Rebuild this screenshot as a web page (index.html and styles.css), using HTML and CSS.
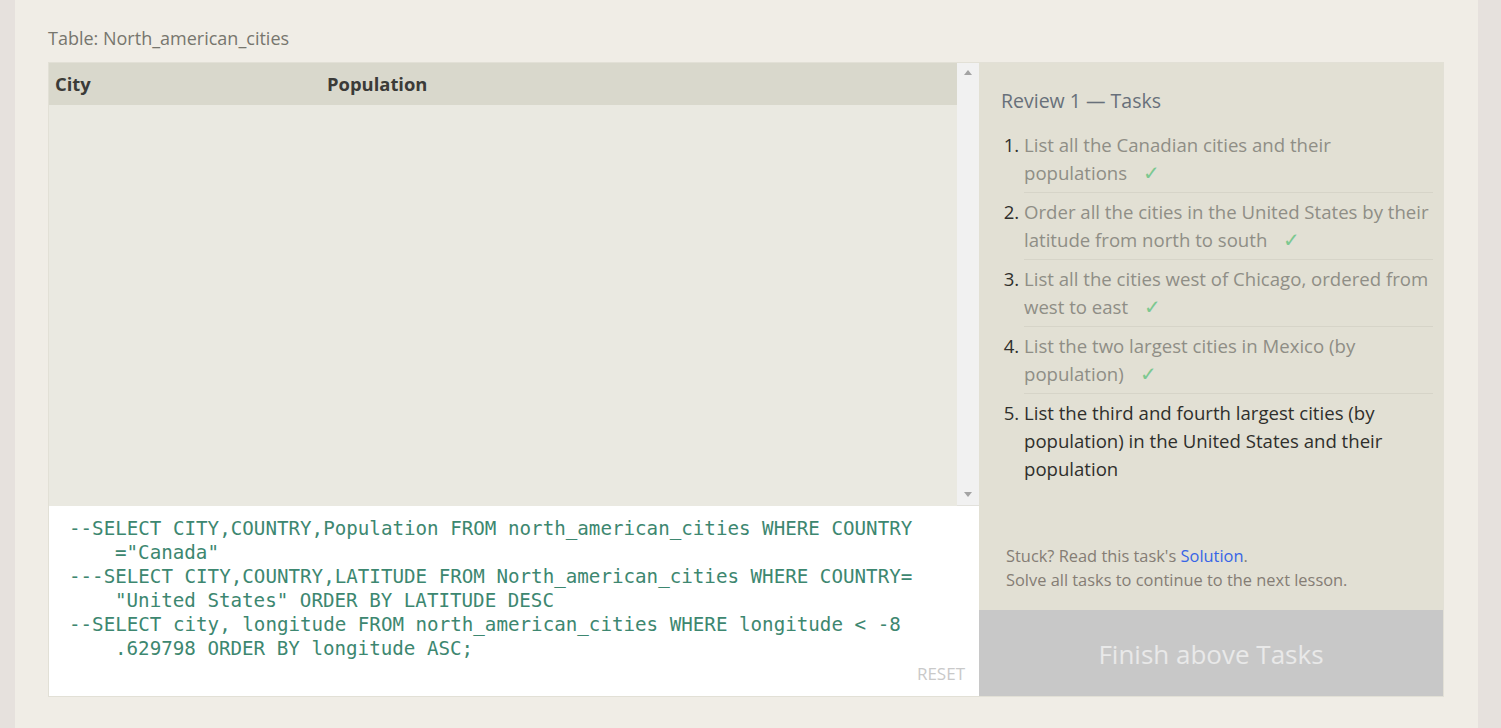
FILE: index.html
```html
<!DOCTYPE html>
<html>
<head>
<meta charset="utf-8">
<link rel="stylesheet" href="styles.css">
</head>
<body>
<div class="page">
  <div class="table-title">Table: North_american_cities</div>
  <div class="box">
    <div class="left">
      <div class="results">
        <div class="table-wrap">
          <div class="thead">
            <div class="th th-city">City</div>
            <div class="th th-pop">Population</div>
          </div>
        </div>
        <div class="scrollbar">
          <span class="arrow up"></span>
          <span class="arrow down"></span>
        </div>
      </div>
      <div class="editor">
        <div class="code">
          <div class="ln">--SELECT CITY,COUNTRY,Population FROM north_american_cities WHERE COUNTRY</div>
          <div class="ln cont">="Canada"</div>
          <div class="ln">---SELECT CITY,COUNTRY,LATITUDE FROM North_american_cities WHERE COUNTRY=</div>
          <div class="ln cont">"United States" ORDER BY LATITUDE DESC</div>
          <div class="ln">--SELECT city, longitude FROM north_american_cities WHERE longitude &lt; -8</div>
          <div class="ln cont">.629798 ORDER BY longitude ASC;</div>
        </div>
        <div class="reset">RESET</div>
      </div>
    </div>
    <div class="right">
      <div class="tasks">
        <h2 class="tasks-title">Review 1 — Tasks</h2>
        <ol class="task-list">
          <li class="task done">List all the Canadian cities and their populations</li>
          <li class="task done">Order all the cities in the United States by their latitude from north to south</li>
          <li class="task done">List all the cities west of Chicago, ordered from west to east</li>
          <li class="task done">List the two largest cities in Mexico (by population)</li>
          <li class="task current">List the third and fourth largest cities (by population) in the United States and their population</li>
        </ol>
        <div class="hint">
          <div>Stuck? Read this task's <a class="solution" href="#">Solution</a>.</div>
          <div>Solve all tasks to continue to the next lesson.</div>
        </div>
      </div>
      <div class="finish">Finish above Tasks</div>
    </div>
  </div>
</div>
</body>
</html>
```

FILE: styles.css
```css
html, body {
  margin: 0;
  padding: 0;
}
body {
  background: #e6e1dd;
  font-family: "Open Sans", "Noto Sans", sans-serif;
  height: 728px;
  overflow: hidden;
}
.page {
  margin: 0 23px 0 15px;
  background: #f0ede6;
  height: 728px;
  padding: 26px 33px 0 33px;
  box-sizing: border-box;
}
.table-title {
  font-size: 18px;
  color: #77766e;
  height: 36px;
  line-height: 24px;
}
.box {
  display: flex;
  width: 1396px;
  height: 635px;
  border: 1px solid #e2e0d6;
  box-sizing: border-box;
}
.left {
  width: 930px;
  display: flex;
  flex-direction: column;
}
.results {
  display: flex;
  height: 443px;
  flex-shrink: 0;
}
.table-wrap {
  flex: 1;
  background: #eae9e1;
}
.thead {
  display: flex;
  height: 42px;
  background: #d9d8cc;
  align-items: center;
}
.th {
  font-weight: 700;
  font-size: 18.4px;
  color: #3b3b38;
  line-height: 40px;
}
.th-city {
  width: 272px;
  padding-left: 6px;
}
.scrollbar {
  width: 22px;
  background: #f1f1f1;
  position: relative;
  border-bottom: 1px solid #e2e1dc;
  box-sizing: border-box;
}
.arrow {
  position: absolute;
  left: 7px;
  width: 0;
  height: 0;
  border-left: 4px solid transparent;
  border-right: 4px solid transparent;
}
.arrow.up {
  top: 7px;
  border-bottom: 5px solid #a3a3a3;
}
.arrow.down {
  bottom: 8px;
  border-top: 5px solid #a3a3a3;
}
.editor {
  flex: 1;
  background: #ffffff;
  display: flex;
  flex-direction: column;
  padding: 11px 14px 12px 20px;
}
.code {
  flex: 1;
  font-family: "DejaVu Sans Mono", "Liberation Mono", monospace;
  font-size: 19.2px;
  line-height: 24px;
  color: #3d8770;
}
.ln {
  white-space: pre;
}
.ln.cont {
  padding-left: 46px;
}
.reset {
  align-self: flex-end;
  font-size: 17px;
  color: #c9c9c9;
  line-height: 20px;
}
.right {
  flex: 1;
  background: #e2e0d4;
  display: flex;
  flex-direction: column;
}
.tasks {
  flex: 1;
  padding: 24px 10px 0 22px;
  display: flex;
  flex-direction: column;
}
.tasks-title {
  margin: 0 0 17px 0;
  font-weight: 400;
  font-size: 19.5px;
  line-height: 28px;
  color: #68707a;
}
.task-list {
  margin: 0;
  padding: 0 0 0 23px;
  flex: 1;
}
.task {
  font-size: 18.6px;
  line-height: 28px;
  color: #2f2f2c;
  padding-bottom: 5px;
  margin-bottom: 5px;
  border-bottom: 1px solid #d6d4c8;
}
.task::marker {
  color: #2f2f2c;
}
.task:first-child {
  margin-top: -1px;
}
.task.current {
  border-bottom: none;
}
.task.done {
  color: #8f8e86;
}
.task.done::after {
  content: "\2713";
  display: inline-block;
  color: #7cc890;
  margin-left: 16px;
  font-size: 20px;
  line-height: 18px;
}
.hint {
  font-size: 16.4px;
  line-height: 24px;
  color: #857d74;
  padding-left: 5px;
  padding-bottom: 18px;
}
.solution {
  color: #3765e6;
  text-decoration: none;
}
.finish {
  height: 86px;
  background: #c8c8c8;
  color: #e9e9e9;
  font-size: 26px;
  display: flex;
  align-items: center;
  justify-content: center;
  padding-top: 2px;
  box-sizing: border-box;
}
```
